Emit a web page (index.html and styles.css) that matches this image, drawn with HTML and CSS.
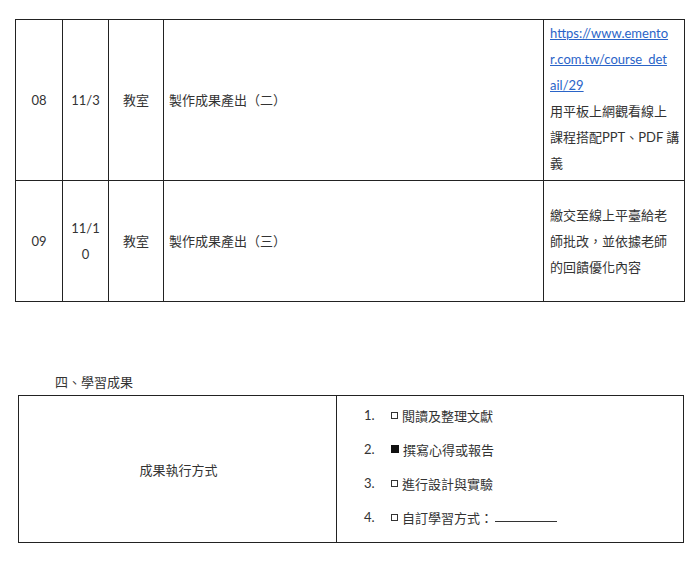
FILE: index.html
```html
<!DOCTYPE html>
<html lang="zh-Hant">
<head>
<meta charset="utf-8">
<title>課程進度</title>
<link rel="stylesheet" href="styles.css">
</head>
<body>
<div class="page">
  <table class="schedule">
    <colgroup>
      <col class="c-no"><col class="c-date"><col class="c-place"><col class="c-topic"><col class="c-note">
    </colgroup>
    <tr class="r1">
      <td class="center">08</td>
      <td class="center">11/3</td>
      <td class="center">教室</td>
      <td class="topic">製作成果產出（二）</td>
      <td class="note"><a href="#">https://www.emento<br>r.com.tw/course_det<br>ail/29</a><br>用平板上網觀看線上<br>課程搭配PPT、PDF 講<br>義</td>
    </tr>
    <tr class="r2">
      <td class="center">09</td>
      <td class="center">11/1<br>0</td>
      <td class="center">教室</td>
      <td class="topic">製作成果產出（三）</td>
      <td class="note">繳交至線上平臺給老<br>師批改，並依據老師<br>的回饋優化內容</td>
    </tr>
  </table>

  <h2 class="section">四、學習成果</h2>

  <table class="result">
    <tr>
      <td class="label">成果執行方式</td>
      <td class="options">
        <div class="opt"><span class="num">1.</span><span class="box"></span><span>閱讀及整理文獻</span></div>
        <div class="opt"><span class="num">2.</span><span class="box checked"></span><span>撰寫心得或報告</span></div>
        <div class="opt"><span class="num">3.</span><span class="box"></span><span>進行設計與實驗</span></div>
        <div class="opt"><span class="num">4.</span><span class="box"></span><span>自訂學習方式：</span><span class="blank"></span></div>
      </td>
    </tr>
  </table>
</div>
</body>
</html>
```

FILE: styles.css
```css
html, body {
  margin: 0;
  padding: 0;
  background: #fff;
}
body {
  font-family: "Lato", "Noto Sans CJK TC", sans-serif;
  font-size: 13px;
  color: #333;
}
.page {
  padding: 19px 0 0 15px;
}
table {
  border-collapse: collapse;
  table-layout: fixed;
}
td {
  border: 1px solid #222;
  padding: 0;
}
.schedule {
  width: 669px;
}
.c-no { width: 47px; }
.c-date { width: 46px; }
.c-place { width: 55px; }
.c-topic { width: 380px; }
.c-note { width: 141px; }
.schedule td {
  line-height: 26px;
  vertical-align: middle;
}
.r1 td { height: 158px; }
.r1 .note { height: 154px; padding-bottom: 4px; }
.r2 td { height: 120px; }
.center { text-align: center; }
.topic { padding-left: 5px; }
.note { padding-left: 6px; }
.note a {
  color: #2a64c8;
  text-decoration: underline;
}
.section {
  margin: 70px 0 0 40px;
  font-size: 13px;
  font-weight: normal;
  line-height: 20px;
  color: #333;
}
.result {
  margin: 3px 0 0 3px;
  width: 666px;
}
.label {
  width: 315px;
  text-align: center;
  vertical-align: middle;
  padding-left: 2px;
}
.options {
  padding: 2px 0 8px 27px;
  vertical-align: top;
}
.opt {
  display: flex;
  align-items: center;
  height: 34px;
}
.num {
  width: 27px;
}
.box {
  width: 5px;
  height: 5px;
  border: 1px solid #333;
  margin-right: 4px;
}
.box.checked {
  background: #111;
  border-color: #111;
  width: 6px;
  height: 6px;
}
.blank {
  display: inline-block;
  width: 62px;
  height: 8px;
  border-bottom: 1px solid #333;
  margin-left: 2px;
}
```
